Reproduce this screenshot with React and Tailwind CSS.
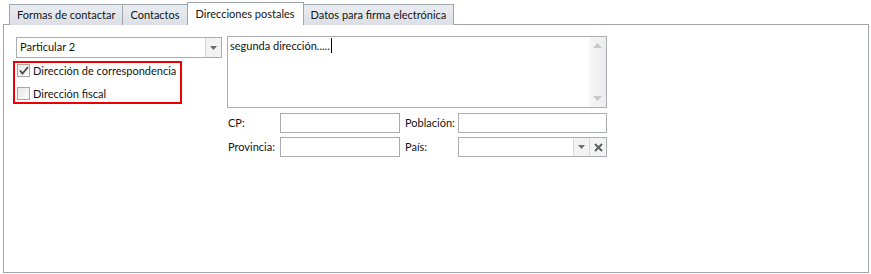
import React from 'react';

const font = { fontFamily: 'Lato, "Liberation Sans", sans-serif' };

const Tab = ({ label, active }) => (
    <div
        className={
            active
                ? 'h-[23px] px-[8px] pt-[3px] border border-b-0 border-[#a0a4ab] bg-white -ml-[1px] relative z-10 whitespace-nowrap'
                : 'h-[21px] px-[7px] pt-[2px] border border-b-0 border-[#a0a4ab] bg-gradient-to-b from-[#e9ecf0] to-[#dce0e6] -ml-[1px] first:ml-0 whitespace-nowrap'
        }
    >
        {label}
    </div>
);

const Caret = () => (
    <svg width="7" height="4" viewBox="0 0 7 4">
        <path d="M0 0h7L3.5 4z" fill="#6d6d6d" />
    </svg>
);

const Checkbox = ({ checked, label }) => (
    <div className="flex items-center h-[13px] whitespace-nowrap">
        <div className="w-[13px] h-[13px] border border-[#a7a7a7] bg-gradient-to-br from-[#e8e8e8] to-[#fafafa] flex items-center justify-center ml-[2px]">
            {checked && (
                <svg width="10" height="9" viewBox="0 0 10 9">
                    <path d="M1 4.5l2.5 3L9 1" stroke="#4a4a4a" strokeWidth="1.8" fill="none" />
                </svg>
            )}
        </div>
        <span className="ml-[3px]">{label}</span>
    </div>
);

const TextBox = () => <div className="h-[20px] border border-[#a9adb3] bg-white"></div>;

export default function App() {
    return (
        <div className="w-[871px] h-[274px] bg-white text-[11px] leading-[16px] text-[#141414] pl-[3px] pt-[2px]" style={font}>
            {/* Tab strip */}
            <div className="flex items-end ml-[6px] h-[23px]">
                <Tab label="Formas de contactar" />
                <Tab label="Contactos" />
                <Tab label="Direcciones postales" active />
                <Tab label="Datos para firma electrónica" />
            </div>

            {/* Page body */}
            <div className="w-[866px] h-[249px] -mt-[1px] border border-[#a0a4ab] bg-white flex pl-[12px] pt-[11px]">
                <div className="w-[206px] flex flex-col">
                    <div className="mt-[1px] h-[21px] border border-[#a9adb3] flex">
                        <div className="flex-1 pl-[3px] pt-[1px]">Particular 2</div>
                        <div className="w-[16px] border-l border-[#d6d8dc] bg-[#f3f3f3] flex items-center justify-center">
                            <Caret />
                        </div>
                    </div>
                    <div className="mt-[3px] -ml-[3px] w-[169px] h-[43px] border-2 border-[#ee0000] flex flex-col gap-[10px] pt-[1px]">
                        <Checkbox checked label="Dirección de correspondencia" />
                        <Checkbox label="Dirección fiscal" />
                    </div>
                </div>

                <div className="ml-[5px] flex flex-col">
                    {/* Address memo */}
                    <div className="w-[380px] h-[72px] border border-[#a9adb3] flex">
                        <div className="flex-1 pl-[2px] pt-[1px] flex items-start">
                            <span>segunda dirección.....</span>
                            <span className="w-[1px] h-[15px] bg-black ml-[1px]"></span>
                        </div>
                        <div className="w-[17px] bg-gradient-to-r from-[#f6f6f6] to-[#ececec] flex flex-col items-center justify-between py-[6px]">
                            <svg width="9" height="5" viewBox="0 0 9 5"><path d="M0 5h9L4.5 0z" fill="#c8c8c8" /></svg>
                            <svg width="9" height="5" viewBox="0 0 9 5"><path d="M0 0h9L4.5 5z" fill="#c8c8c8" /></svg>
                        </div>
                    </div>

                    <div className="mt-[5px] grid grid-cols-[53px_120px_58px_149px] gap-y-[4px] items-center whitespace-nowrap">
                        <div className="pl-[1px]">CP:</div>
                        <TextBox />
                        <div className="pl-[5px]">Población:</div>
                        <TextBox />
                        <div className="pl-[1px]">Provincia:</div>
                        <TextBox />
                        <div className="pl-[5px]">País:</div>
                        <div className="h-[20px] border border-[#a9adb3] flex">
                            <div className="flex-1"></div>
                            <div className="w-[16px] border-l border-[#d6d8dc] bg-[#f3f3f3] flex items-center justify-center">
                                <Caret />
                            </div>
                            <div className="w-[17px] border-l border-[#d6d8dc] bg-[#f3f3f3] flex items-center justify-center">
                                <svg width="9" height="9" viewBox="0 0 9 9">
                                    <path d="M1 1l7 7M8 1L1 8" stroke="#606060" strokeWidth="2" />
                                </svg>
                            </div>
                        </div>
                    </div>
                </div>
            </div>
        </div>
    );
}
